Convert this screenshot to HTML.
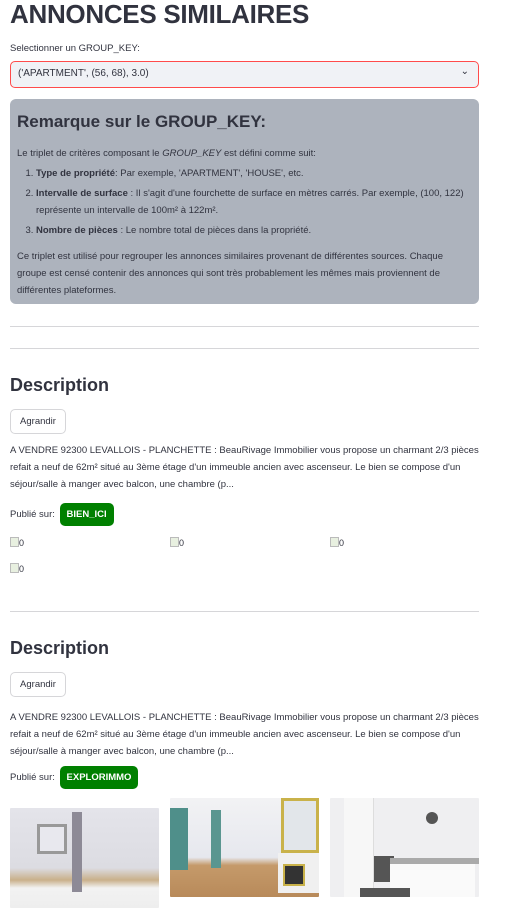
<!DOCTYPE html>
<html><head><meta charset="utf-8"><style>
*{margin:0;padding:0;box-sizing:border-box}
body{width:512px;height:916px;overflow:hidden;background:#fff;font-family:"Liberation Sans",sans-serif;color:#31333f;position:relative}
.a{position:absolute}
h1{font-size:26px;font-weight:bold;letter-spacing:-0.3px}
.lbl{font-size:9.5px;left:10px;top:43px}
.sel{left:10px;top:61px;width:469px;height:27px;border:1px solid #ff4b4b;border-radius:5px;background:#f0f2f6;font-size:10px;padding:6px 7px}
.note{left:10px;top:99px;width:469px;height:205px;background:#adb3bd;border-radius:6px;padding:12px 7px;font-size:9.5px;line-height:17px}
.note h2{font-size:17px;font-weight:bold;margin-bottom:12px;line-height:22px}
.note ol{padding-left:19px;margin:3px 0 9px}
.note li{margin-bottom:3px}
.hr{left:10px;width:469px;height:1px;background:#d6d6d9}
.h3{font-size:18px;font-weight:bold;left:10px}
.btn{left:10px;width:56px;height:25px;border:1px solid #d6d6d9;border-radius:5px;font-size:9.5px;text-align:center;line-height:23px}
.txt{left:10px;width:472px;font-size:9.5px;line-height:17px}
.pub{left:10px;font-size:9.5px}
.tag{display:inline-block;background:#008000;color:#fff;font-weight:bold;border-radius:5px;padding:6px 7px;margin-left:2px;vertical-align:middle}
.bi{font-size:9px}
.bi:before{content:"";display:inline-block;width:7px;height:8px;border:1px solid #bbb;background:#e8f0e0;vertical-align:-1px}
.ph{border-radius:1px}
</style></head><body>
<div class="a" style="left:10px;top:-1px"><h1>ANNONCES SIMILAIRES</h1></div>
<div class="a lbl">Selectionner un GROUP_KEY:</div>
<div class="a sel">('APARTMENT', (56, 68), 3.0)<span style="position:absolute;right:9px;top:4px;font-size:10px">&#8964;</span></div>
<div class="a note"><h2>Remarque sur le GROUP_KEY:</h2>
<div>Le triplet de critères composant le <i>GROUP_KEY</i> est défini comme suit:</div>
<ol><li><b>Type de propriété</b>: Par exemple, 'APARTMENT', 'HOUSE', etc.</li>
<li><b>Intervalle de surface</b> : Il s'agit d'une fourchette de surface en mètres carrés. Par exemple, (100, 122) représente un intervalle de 100m² à 122m².</li>
<li><b>Nombre de pièces</b> : Le nombre total de pièces dans la propriété.</li></ol>
<div>Ce triplet est utilisé pour regrouper les annonces similaires provenant de différentes sources. Chaque groupe est censé contenir des annonces qui sont très probablement les mêmes mais proviennent de différentes plateformes.</div></div>
<div class="a hr" style="top:326px"></div>
<div class="a hr" style="top:348px"></div>
<div class="a h3" style="top:375px">Description</div>
<div class="a btn" style="top:409px">Agrandir</div>
<div class="a txt" style="top:442px">A VENDRE 92300 LEVALLOIS - PLANCHETTE : BeauRivage Immobilier vous propose un charmant 2/3 pièces refait a neuf de 62m² situé au 3ème étage d'un immeuble ancien avec ascenseur. Le bien se compose d'un séjour/salle à manger avec balcon, une chambre (p...</div>
<div class="a pub" style="top:503px">Publié sur: <span class="tag">BIEN_ICI</span></div>
<div class="a bi" style="left:10px;top:537px">0</div>
<div class="a bi" style="left:170px;top:537px">0</div>
<div class="a bi" style="left:330px;top:537px">0</div>
<div class="a bi" style="left:10px;top:563px">0</div>
<div class="a hr" style="top:611px"></div>
<div class="a h3" style="top:638px">Description</div>
<div class="a btn" style="top:672px">Agrandir</div>
<div class="a txt" style="top:709px">A VENDRE 92300 LEVALLOIS - PLANCHETTE : BeauRivage Immobilier vous propose un charmant 2/3 pièces refait a neuf de 62m² situé au 3ème étage d'un immeuble ancien avec ascenseur. Le bien se compose d'un séjour/salle à manger avec balcon, une chambre (p...</div>
<div class="a pub" style="top:766px">Publié sur: <span class="tag">EXPLORIMMO</span></div>
<div class="a ph" style="left:10px;top:808px;width:149px;height:100px;background:linear-gradient(180deg,#e4e4ea 0%,#dcdce2 60%,#c9b08a 72%,#f2f2f2 80%,#eee 100%)">
<div class="a" style="left:27px;top:16px;width:30px;height:30px;border:3px solid #999;background:#e8e8ee"></div>
<div class="a" style="left:62px;top:4px;width:10px;height:80px;background:#8d8a96"></div></div>
<div class="a ph" style="left:170px;top:798px;width:149px;height:99px;background:linear-gradient(180deg,#f2f2f4 0%,#e6e8ee 60%,#c59a6a 68%,#b88a5a 100%)">
<div class="a" style="left:0;top:10px;width:18px;height:62px;background:#4f8f8a"></div>
<div class="a" style="left:41px;top:12px;width:10px;height:58px;background:#5a9690"></div>
<div class="a" style="left:111px;top:0;width:38px;height:55px;border:3px solid #c9b24a;background:#e2e6ea"></div>
<div class="a" style="left:108px;top:55px;width:41px;height:40px;background:#f0f0f0"></div>
<div class="a" style="left:113px;top:66px;width:22px;height:22px;background:#333;border:2px solid #c9b24a"></div></div>
<div class="a ph" style="left:330px;top:798px;width:149px;height:99px;background:#efeff1">
<div class="a" style="left:14px;top:0;width:30px;height:99px;background:#f7f7f7;border-right:1px solid #ddd"></div>
<div class="a" style="left:44px;top:58px;width:20px;height:26px;background:#555"></div>
<div class="a" style="left:60px;top:60px;width:89px;height:6px;background:#aaa"></div>
<div class="a" style="left:60px;top:66px;width:85px;height:33px;background:#fafafa"></div>
<div class="a" style="left:30px;top:90px;width:50px;height:9px;background:#555"></div>
<div class="a" style="left:96px;top:14px;width:12px;height:12px;border-radius:50%;background:#555"></div></div>
</body></html>
